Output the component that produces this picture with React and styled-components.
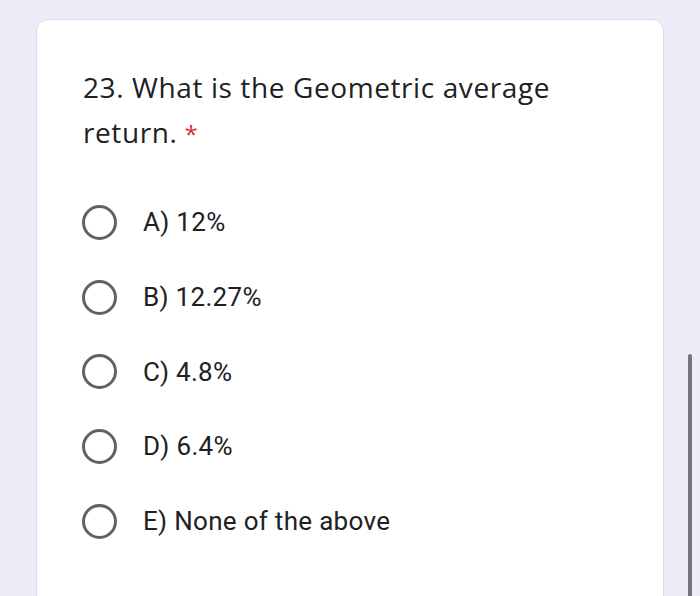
import styled, { createGlobalStyle } from "styled-components";

const GlobalStyle = createGlobalStyle`
  html, body {
    margin: 0;
    padding: 0;
    background: #f0ebf8;
    overflow: hidden;
  }
  body {
    height: 596px;
  }
`;

const Page = styled.div`
  position: relative;
  height: 596px;
  padding-top: 19px;
  box-sizing: border-box;
  overflow: hidden;
`;

const Card = styled.div`
  margin: 0 36px;
  height: 620px;
  background: #ffffff;
  border: 1px solid #dadce0;
  border-radius: 12px;
  padding: 45px 46px 0;
  box-sizing: border-box;
`;

const Title = styled.div`
  font-family: "Open Sans", Roboto, sans-serif;
  font-size: 28px;
  line-height: 45px;
  color: #202124;
  letter-spacing: 0.6px;
`;

const Required = styled.span`
  color: #d93025;
  font-size: 24px;
  margin-left: 7px;
  letter-spacing: 0;
`;

const Options = styled.div`
  display: flex;
  flex-direction: column;
  margin-top: 29px;
`;

const Option = styled.label`
  display: flex;
  align-items: center;
  height: 74.7px;
  gap: 26px;
  font-family: Roboto, "Noto Sans", sans-serif;
  font-size: 26px;
  letter-spacing: 0.3px;
  color: #202124;
`;

const Radio = styled.span`
  width: 35px;
  height: 35px;
  box-sizing: border-box;
  border: 3.5px solid #5f6368;
  border-radius: 50%;
  margin-left: -1px;
  flex: none;
`;

const Scrollbar = styled.div`
  position: absolute;
  left: 688px;
  top: 354px;
  width: 4px;
  height: 260px;
  border-radius: 2px;
  background: #77737d;
`;

const choices = ["A) 12%", "B) 12.27%", "C) 4.8%", "D) 6.4%", "E) None of the above"];

export default function App() {
  return (
    <>
      <GlobalStyle />
      <Page>
        <Card>
          <Title>
            23. What is the Geometric average return.
            <Required>*</Required>
          </Title>
          <Options>
            {choices.map((c) => (
              <Option key={c}>
                <Radio />
                {c}
              </Option>
            ))}
          </Options>
        </Card>
        <Scrollbar />
      </Page>
    </>
  );
}
